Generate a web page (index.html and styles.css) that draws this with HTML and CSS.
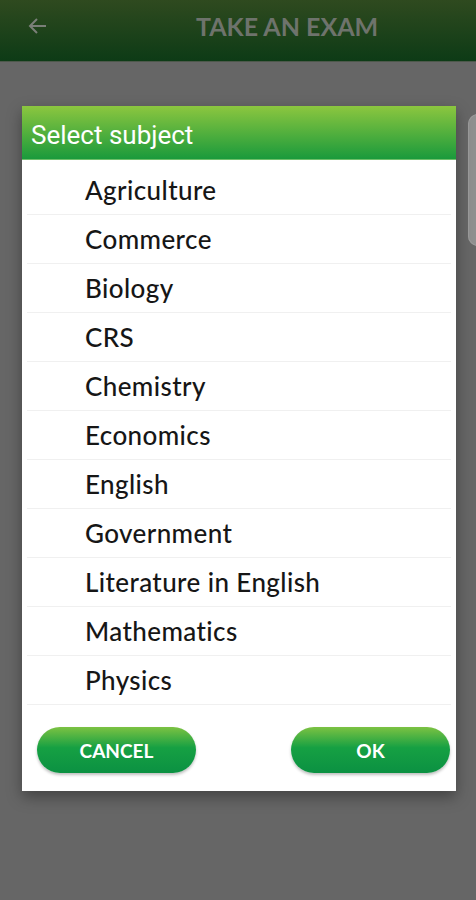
FILE: index.html
```html
<!DOCTYPE html>
<html lang="en">
<head>
  <meta charset="UTF-8">
  <meta name="viewport" content="width=device-width, initial-scale=1.0">
  <title>Take an exam</title>
  <link rel="stylesheet" href="styles.css">
</head>
<body>
  <div class="screen">
    <header class="topBar">
      <svg class="backIcon" width="24" height="24" viewBox="0 0 24 24">
        <path d="M20 12H5M11 5l-7 7 7 7" fill="none" stroke="#7a7f78" stroke-width="2"/>
      </svg>
      <h1 class="pageTitle">TAKE AN EXAM</h1>
    </header>
    <div class="backdrop">
      <div class="peekCard"></div>
      <div class="dialog">
        <div class="dialogTitle">Select subject</div>
        <ul class="subjectList">
          <li>Agriculture</li>
          <li>Commerce</li>
          <li>Biology</li>
          <li>CRS</li>
          <li>Chemistry</li>
          <li>Economics</li>
          <li>English</li>
          <li>Government</li>
          <li>Literature in English</li>
          <li>Mathematics</li>
          <li>Physics</li>
        </ul>
        <div class="dialogActions">
          <button class="pillBtn">CANCEL</button>
          <button class="pillBtn">OK</button>
        </div>
      </div>
    </div>
  </div>
</body>
</html>
```

FILE: styles.css
```css
body{
  margin: 0;
  width: 476px;
  height: 900px;
  overflow: hidden;
  font-family: 'Lato', sans-serif;
  background-color: #666666;
}

.screen{
  display: flex;
  flex-direction: column;
  height: 100%;
}

.topBar{
  height: 62px;
  display: flex;
  align-items: center;
  background: linear-gradient(#2f4a1f, #0d3b16);
  border-bottom: 1px solid #4d584b;
  box-sizing: border-box;
}

.backIcon{
  margin-left: 26px;
  margin-top: -10px;
}

.pageTitle{
  flex: 1;
  margin: -10px 0 0 0;
  padding-left: 146px;
  font-size: 25px;
  font-weight: 700;
  color: #6e736c;
}

.backdrop{
  flex: 1;
  position: relative;
  padding: 44px 0 0 22px;
}

.peekCard{
  position: absolute;
  left: 468px;
  top: 52px;
  width: 30px;
  height: 132px;
  border-radius: 10px;
  background-color: #8f8f8f;
  box-shadow: inset 0 0 0 1px #9a9a9a;
}

.dialog{
  width: 434px;
  background-color: #ffffff;
  box-shadow: 0 6px 14px rgba(0, 0, 0, 0.35);
  position: relative;
}

.dialogTitle{
  height: 54px;
  box-sizing: border-box;
  padding: 14px 0 0 9px;
  background: linear-gradient(#8cc63f, #1a9a3c);
  border-bottom: 1px solid #6fbf6a;
  color: #ffffff;
  font-family: 'Roboto', sans-serif;
  font-size: 26px;
  line-height: 30px;
}

.subjectList{
  list-style: none;
  margin: 0;
  padding: 6px 5px 0 5px;
}

.subjectList li{
  height: 48px;
  border-bottom: 1px solid #f0f0f0;
  display: flex;
  align-items: center;
  padding-left: 58px;
  font-size: 26px;
  font-weight: 500;
  color: #161616;
  letter-spacing: 0.4px;
}

.dialogActions{
  display: flex;
  justify-content: space-between;
  padding: 22px 6px 18px 15px;
}

.pillBtn{
  width: 159px;
  height: 46px;
  border: none;
  border-radius: 23px;
  background: linear-gradient(#7cc242, #16a043 45%, #0b9142);
  box-shadow: 0 2px 3px rgba(0, 0, 0, 0.25);
  color: #ffffff;
  font-family: 'Lato', sans-serif;
  font-weight: 700;
  font-size: 19px;
}
```
